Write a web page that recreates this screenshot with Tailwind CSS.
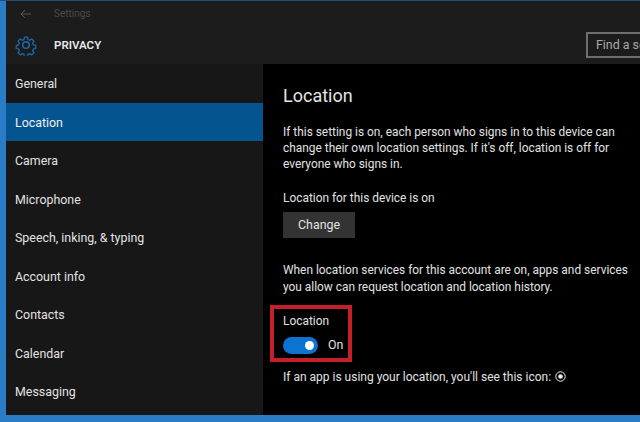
<!DOCTYPE html>
<html lang="en">
<head>
<meta charset="UTF-8">
<title>Settings</title>
<script src="https://cdn.jsdelivr.net/npm/@tailwindcss/browser@4"></script>
</head>
<body class="w-[640px] h-[422px] overflow-hidden bg-[#2a7cc7] font-['Roboto','Liberation_Sans',sans-serif] text-[12.4px] text-[#e2e2e2]">
  <div class="flex flex-col h-[422px] pl-[6px] pb-[7px]">
    <div class="h-[1px] -ml-[6px] bg-[#1d4f7c] shrink-0"></div>
    <!-- title bar + header -->
    <div class="h-[63px] bg-[#1c1c1c] flex flex-col shrink-0 relative">
      <div class="h-[25px] flex items-center pl-[14px] gap-[22px] text-[10px] text-[#4a4a4a]">
        <svg width="12" height="10" viewBox="0 0 12 10" fill="none" stroke="#555" stroke-width="1"><path d="M11 5H1M5 1L1 5l4 4"/></svg>
        <span>Settings</span>
      </div>
      <div class="flex-1 flex items-center">
        <svg class="ml-[9px]" width="22" height="22" viewBox="0 0 24 24" fill="none" stroke="#1a6bb0" stroke-width="1.6" stroke-linejoin="round"><circle cx="12" cy="12" r="3.6"/><path d="M10 2h4l.6 3 2.2 1 2.6-1.700 2.800 2.800-1.700 2.600 1 2.200 3 .6v4l-3 .6-1 2.200 1.700 2.600-2.800 2.800-2.600-1.700-2.200 1-.6 3h-4l-.6-3-2.200-1-2.600 1.700-2.800-2.800 1.700-2.600-1-2.200-3-.6v-4l3-.6 1-2.200-1.700-2.600 2.800-2.800 2.600 1.700 2.200-1z" transform="translate(1.800 1.800) scale(.85)"/></svg>
        <span class="ml-[17px] pt-[2px] font-semibold text-[11.5px] text-[#e8e8e8]">PRIVACY</span>
      </div>
      <div class="absolute left-[580px] top-[31px] w-[70px] h-[26px] border-2 border-[#6e6e6e] pl-[8px] flex items-center text-[#a8a8a8] whitespace-nowrap overflow-hidden">Find a se</div>
    </div>
    <div class="flex flex-1 min-h-0">
      <!-- side nav -->
      <nav class="w-[257px] bg-[#171717] flex flex-col shrink-0">
        <div class="h-[38.500px] flex items-center pl-[9px] pt-[3px] shrink-0">General</div>
        <div class="h-[38.500px] flex items-center pl-[9px] pt-[3px] shrink-0 bg-[#04558f] text-[#f0f0f0]">Location</div>
        <div class="h-[38.500px] flex items-center pl-[9px] pt-[3px] shrink-0">Camera</div>
        <div class="h-[38.500px] flex items-center pl-[9px] pt-[3px] shrink-0">Microphone</div>
        <div class="h-[38.500px] flex items-center pl-[9px] pt-[3px] shrink-0">Speech, inking, &amp; typing</div>
        <div class="h-[38.500px] flex items-center pl-[9px] pt-[3px] shrink-0">Account info</div>
        <div class="h-[38.500px] flex items-center pl-[9px] pt-[3px] shrink-0">Contacts</div>
        <div class="h-[38.500px] flex items-center pl-[9px] pt-[3px] shrink-0">Calendar</div>
        <div class="h-[38.500px] flex items-center pl-[9px] pt-[3px] shrink-0">Messaging</div>
      </nav>
      <!-- content -->
      <main class="flex-1 bg-black pl-[20px] pt-[20px] min-w-0 flex flex-col items-start text-[11.9px]">
        <h1 class="text-[18px] leading-[24px] text-[#e4e4e4]">Location</h1>
        <p class="mt-[16px] w-[350px] leading-[16px]">If this setting is on, each person who signs in to this device can change their own location settings. If it's off, location is off for everyone who signs in.</p>
        <p class="mt-[18px] leading-[16px]">Location for this device is on</p>
        <button class="mt-[6px] w-[72px] h-[26px] bg-[#333333] text-[12.4px] text-[#e2e2e2]">Change</button>
        <p class="mt-[24px] w-[350px] leading-[16.500px]">When location services for this account are on, apps and services you allow can request location and location history.</p>
        <div class="mt-[10px] -ml-[13px] w-[82px] h-[57px] border-[4px] border-[#c4202a] pl-[9px] pt-[4px]">
          <div class="leading-[16px]">Location</div>
          <div class="mt-[7px] flex items-center gap-[10px]">
            <div class="w-[35px] h-[17px] rounded-full bg-[#0a74d0] flex items-center justify-end pr-[4px]">
              <div class="w-[9px] h-[9px] rounded-full bg-white"></div>
            </div>
            <span class="text-[12.4px]">On</span>
          </div>
        </div>
        <div class="mt-[7px] flex items-center gap-[4px] leading-[16px] whitespace-nowrap text-[12px]">
          <span>If an app is using your location, you'll see this icon:</span>
          <svg class="-mt-[2px]" width="11" height="11" viewBox="0 0 11 11"><circle cx="5.500" cy="5.500" r="4.700" fill="none" stroke="#eee" stroke-width="1"/><circle cx="5.500" cy="5.500" r="2.300" fill="#eee"/></svg>
        </div>
      </main>
    </div>
  </div>
</body>
</html>
